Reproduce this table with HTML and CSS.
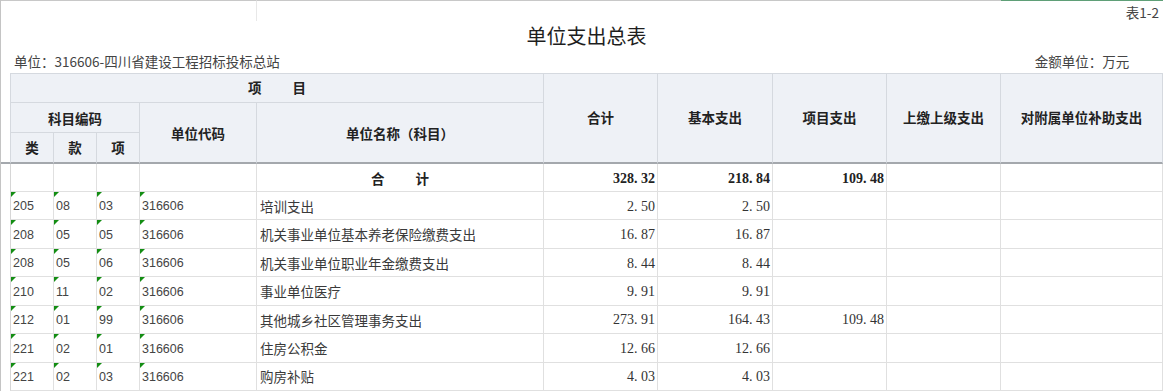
FILE: index.html
```html
<!DOCTYPE html>
<html lang="zh-CN">
<head>
<meta charset="utf-8">
<title>单位支出总表</title>
<link rel="stylesheet" href="styles.css">
</head>
<body>
<table class="sheet">
  <colgroup>
    <col class="c-g"><col class="c-lei"><col class="c-kuan"><col class="c-xiang"><col class="c-dm"><col class="c-mc"><col class="c-hj"><col class="c-jb"><col class="c-xm"><col class="c-sj"><col class="c-fs">
  </colgroup>
  <thead class="head">
    <tr class="r-a"><td class="g"></td><td colspan="4" class="tick"></td><td colspan="5"></td><td class="tabno">表1-2</td></tr>
    <tr class="r-b"><td class="g"></td><td colspan="10" class="title">单位支出总表</td></tr>
    <tr class="r-c"><td class="g"></td><td colspan="9" class="unit">单位：316606-四川省建设工程招标投标总站</td><td class="money">金额单位：万元</td></tr>
    <tr class="h1">
      <th class="g" rowspan="3"></th>
      <th colspan="5" class="first">项<span class="sp"></span>目</th>
      <th rowspan="3" class="tall">合计</th>
      <th rowspan="3" class="tall">基本支出</th>
      <th rowspan="3" class="tall">项目支出</th>
      <th rowspan="3" class="tall">上缴上级支出</th>
      <th rowspan="3" class="tall">对附属单位补助支出</th>
    </tr>
    <tr class="h2">
      <th colspan="3" class="first">科目编码</th>
      <th rowspan="2" class="low">单位代码</th>
      <th rowspan="2" class="low">单位名称（科目）</th>
    </tr>
    <tr class="h3">
      <th class="first low">类</th><th class="low">款</th><th class="low">项</th>
    </tr>
  </thead>
  <tbody class="body">
    <tr class="total">
      <td class="g"></td><td class="first"></td><td></td><td></td><td></td>
      <td class="sum">合<span class="sp"></span>计</td>
      <td class="num b">328<span class="d">.</span>32</td>
      <td class="num b">218<span class="d">.</span>84</td>
      <td class="num b">109<span class="d">.</span>48</td>
      <td></td><td></td>
    </tr>
    <tr>
      <td class="g"></td><td class="first f code">205</td><td class="f code">08</td><td class="f code">03</td><td class="f code">316606</td>
      <td class="name">培训支出</td>
      <td class="num">2<span class="d">.</span>50</td><td class="num">2<span class="d">.</span>50</td><td></td><td></td><td></td>
    </tr>
    <tr>
      <td class="g"></td><td class="first f code">208</td><td class="f code">05</td><td class="f code">05</td><td class="f code">316606</td>
      <td class="name">机关事业单位基本养老保险缴费支出</td>
      <td class="num">16<span class="d">.</span>87</td><td class="num">16<span class="d">.</span>87</td><td></td><td></td><td></td>
    </tr>
    <tr>
      <td class="g"></td><td class="first f code">208</td><td class="f code">05</td><td class="f code">06</td><td class="f code">316606</td>
      <td class="name">机关事业单位职业年金缴费支出</td>
      <td class="num">8<span class="d">.</span>44</td><td class="num">8<span class="d">.</span>44</td><td></td><td></td><td></td>
    </tr>
    <tr>
      <td class="g"></td><td class="first f code">210</td><td class="f code">11</td><td class="f code">02</td><td class="f code">316606</td>
      <td class="name">事业单位医疗</td>
      <td class="num">9<span class="d">.</span>91</td><td class="num">9<span class="d">.</span>91</td><td></td><td></td><td></td>
    </tr>
    <tr>
      <td class="g"></td><td class="first f code">212</td><td class="f code">01</td><td class="f code">99</td><td class="f code">316606</td>
      <td class="name">其他城乡社区管理事务支出</td>
      <td class="num">273<span class="d">.</span>91</td><td class="num">164<span class="d">.</span>43</td><td class="num">109<span class="d">.</span>48</td><td></td><td></td>
    </tr>
    <tr>
      <td class="g"></td><td class="first f code">221</td><td class="f code">02</td><td class="f code">01</td><td class="f code">316606</td>
      <td class="name">住房公积金</td>
      <td class="num">12<span class="d">.</span>66</td><td class="num">12<span class="d">.</span>66</td><td></td><td></td><td></td>
    </tr>
    <tr>
      <td class="g"></td><td class="first f code">221</td><td class="f code">02</td><td class="f code">03</td><td class="f code">316606</td>
      <td class="name">购房补贴</td>
      <td class="num">4<span class="d">.</span>03</td><td class="num">4<span class="d">.</span>03</td><td></td><td></td><td></td>
    </tr>
  </tbody>
</table>
</body>
</html>
```
FILE: styles.css
```css
* { box-sizing: border-box; margin: 0; padding: 0; }
html, body { background: #fff; }
body {
  margin: 0;
  font-family: "Noto Sans CJK SC", "Noto Sans", sans-serif;
  font-size: 13.5px;
  color: #333;
  overflow: hidden;
}

.sheet {
  width: 1163px;
  table-layout: fixed;
  border-collapse: separate;
  border-spacing: 0;
  border-left: 1px solid #c4c4c4;
}
.c-g { width: 9px; }
.c-lei { width: 44px; }
.c-kuan { width: 43px; }
.c-xiang { width: 43px; }
.c-dm { width: 117px; }
.c-mc { width: 287px; }
.c-hj { width: 114px; }
.c-jb { width: 115px; }
.c-xm { width: 114px; }
.c-sj { width: 114px; }
.c-fs { width: 162px; }

td, th {
  padding: 0;
  white-space: nowrap;
  overflow: hidden;
  font-weight: 400;
  line-height: 1;
}

/* top rows above the grid */
.r-a td { height: 21px; border-top: 1px solid #c8c8c8; }
.r-a td.tabno { border-top-color: #5f9f77; }
.r-a td.tick { border-right: 1px solid #e8e8e8; }
.tabno {
  text-align: right;
  padding-right: 4px;
  padding-top: 3px;
  color: #444;
}
.r-b td { height: 30px; }
.title {
  text-align: center;
  font-size: 20px;
  color: #1e1e1e;
}
.r-c td { height: 22px; color: #444; }
.unit { padding-left: 4px; }
.money { text-align: center; }

/* header grid */
.head th {
  background: #eef1f6;
  border-right: 1px solid #d5d9df;
  border-bottom: 1px solid #d5d9df;
  font-weight: 700;
  color: #222;
  text-align: center;
  vertical-align: middle;
}
.head .h1 th { border-top: 1px solid #d5d9df; height: 30px; }
.head .h2 th { height: 30px; padding-top: 3px; }
.head .h3 th { height: 31px; }
.head th.first { border-left: 1px solid #d5d9df; }
.head th.low, .head th.tall { border-bottom: 2px solid #a4a8ad; }
.head .h1 th.g {
  background: transparent;
  border: 0;
  border-bottom: 2px solid #a4a8ad;
}
.head th.tall { padding-bottom: 0; }

.sp { display: inline-block; width: 31px; }

/* body grid */
.body td {
  height: 28.43px;
  border-right: 1px solid #e0e0e0;
  border-bottom: 1px solid #e0e0e0;
  vertical-align: middle;
  padding-top: 2px;
}
.body tr.total td { height: 28px; }
.body td.g { border: 0; }
.body td.first { border-left: 1px solid #d6d6d6; }

.code {
  font-family: "Liberation Sans", Arial, sans-serif;
  font-size: 12.5px;
  color: #444;
  padding-left: 2px;
}
.name { padding-left: 3px; color: #3a3a3a; }
.sum { text-align: center; font-weight: 700; color: #222; }
.num {
  font-family: "Liberation Serif", "Times New Roman", serif;
  font-size: 14px;
  text-align: right;
  padding-right: 2px;
  color: #333;
}
.num.b { font-weight: 700; color: #222; }
.d { margin-right: 0.25em; }

.f { position: relative; }
.f::before {
  content: "";
  position: absolute;
  left: 0;
  top: 0;
  border-top: 5px solid #138d13;
  border-right: 5px solid transparent;
}
```
